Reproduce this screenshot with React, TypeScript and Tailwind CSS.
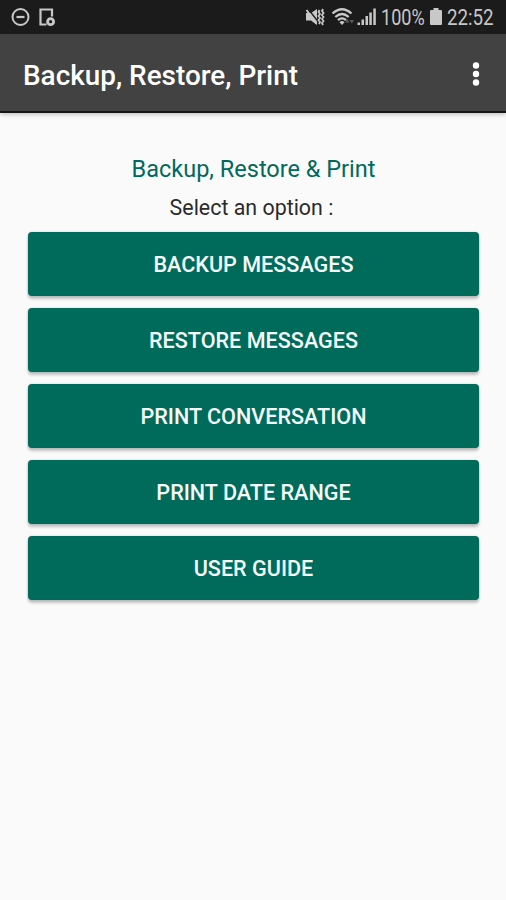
const options = [
  "Backup messages",
  "Restore messages",
  "Print conversation",
  "Print date range",
  "User guide",
];

export default function App() {
  return (
    <div className="flex h-[900px] w-[506px] flex-col overflow-hidden bg-[#fafafa] font-['Roboto','Noto_Sans',sans-serif]">
      <StatusBar />
      <AppBar />
      <main className="flex flex-col pt-10 pr-[27px] pl-[28px]">
        <h2 className="text-center text-[23.5px] leading-[32px] text-[#00695c]">
          Backup, Restore &amp; Print
        </h2>
        <p className="mr-1 mt-2 text-center text-[21.4px] leading-[30px] text-[#2b2b2b]">
          Select an option :
        </p>
        <div className="mt-[9px] flex flex-col gap-3">
          {options.map((label) => (
            <OptionButton key={label} label={label} />
          ))}
        </div>
      </main>
    </div>
  );
}

function OptionButton({ label }: { label: string }) {
  return (
    <button className="h-16 w-full rounded-[4px] bg-[#006a5b] pt-[2px] text-[21.6px] font-medium text-[#f4faf9] uppercase shadow-[0_0_2px_rgba(0,0,0,0.22),0_3px_3px_rgba(0,0,0,0.22)]">
      {label}
    </button>
  );
}

function StatusBar() {
  return (
    <div className="flex h-[34px] shrink-0 items-center bg-[#1b1b1b] pr-3 pl-[10px] text-[#c8c8c8]">
      <DoNotDisturbIcon />
      <DeviceIcon />
      <div className="ml-auto flex items-center">
        <MutedIcon />
        <WifiIcon />
        <SignalIcon />
        <span className="ml-1 inline-block w-[45px] origin-left scale-x-[0.82] pt-[2px] text-[22px] leading-8">
          100%
        </span>
        <BatteryIcon />
        <span className="ml-[5px] inline-block w-[47px] origin-left scale-x-[0.85] pt-[2px] text-[22px] leading-8">
          22:52
        </span>
      </div>
    </div>
  );
}

function AppBar() {
  return (
    <header className="flex h-[79px] shrink-0 items-center justify-between border-b-2 border-[#161616] bg-[#424242] pl-[23px] shadow-[0_2px_4px_rgba(0,0,0,0.2)]">
      <h1 className="mt-[6px] text-[27.9px] leading-9 font-medium text-white">
        Backup, Restore, Print
      </h1>
      <button className="mt-[2px] mr-[23px]" aria-label="More options">
        <svg className="h-6 w-[14px]" viewBox="0 0 14 24" fill="white">
          <circle cx="7" cy="3.5" r="3.2" />
          <circle cx="7" cy="12" r="3.2" />
          <circle cx="7" cy="20.5" r="3.2" />
        </svg>
      </button>
    </header>
  );
}

function DoNotDisturbIcon() {
  return (
    <svg className="h-5 w-5" viewBox="0 0 20 20" fill="none" stroke="currentColor">
      <circle cx="10.5" cy="10" r="8" strokeWidth={2} />
      <path d="M6.5 10h8" strokeWidth={2.2} />
    </svg>
  );
}

function DeviceIcon() {
  return (
    <svg className="ml-2 h-5 w-5" viewBox="0 0 20 20" fill="none" stroke="currentColor">
      <path d="M8.5 17.5H2.5V2.5h11.5v7" strokeWidth={2.2} />
      <circle cx="12.6" cy="14.7" r="3" strokeWidth={2.8} />
    </svg>
  );
}

function MutedIcon() {
  return (
    <svg className="h-5 w-5" viewBox="0 0 20 20" fill="none">
      <path d="M1 6h5l6-4v16l-6-4.5H1z" fill="currentColor" />
      <path d="M3.5 2.5l9.5 12" stroke="#1b1b1b" strokeWidth={1.3} />
      <path d="M1.5 3l10 13.5" stroke="currentColor" strokeWidth={2} />
      <path
        d="M14.5 3l-1 2 1.5 2-1.5 2 1.5 2-1.5 2 1.5 2-1 2M18 2l-1 2 1.5 2-1.5 2 1.5 2-1.5 2 1.500 2-1.500 2 1 2"
        stroke="currentColor"
        strokeWidth={1.8}
      />
    </svg>
  );
}

function WifiIcon() {
  return (
    <svg className="ml-[6px] h-5 w-6" viewBox="0 0 24 20" fill="none">
      <path
        d="M1.5 6.5Q11 -2 20.5 6.5M4.300 10Q11 4 17.700 10M7 13.200Q11 9.500 15 13.200"
        stroke="currentColor"
        strokeWidth={2.3}
      />
      <path d="M8.5 15.200Q11 13 13.5 15.200L11 18z" fill="currentColor" />
      <path d="M14 15.500l2.300-3.500 2.300 3.500zM18.500 13l2.300 3.500 2.300-3.500z" fill="#5c5c5c" />
    </svg>
  );
}

function SignalIcon() {
  return (
    <svg className="ml-[2px] h-5 w-5" viewBox="0 0 20 20" fill="currentColor">
      <rect x="0.5" y="15.5" width="2.5" height="2.5" />
      <rect x="4.5" y="12.5" width="2.5" height="5.5" />
      <rect x="8.5" y="9" width="2.5" height="9" />
      <rect x="12.300" y="5.500" width="2.5" height="12.5" />
      <rect x="16.300" y="1.500" width="2.500" height="16.5" />
    </svg>
  );
}

function BatteryIcon() {
  return (
    <svg className="ml-[4px] h-5 w-3" viewBox="0 0 12 20" fill="currentColor">
      <path d="M3.5 1h5v2H11a1 1 0 0 1 1 1v13a1 1 0 0 1-1 1H1a1 1 0 0 1-1-1V4a1 1 0 0 1 1-1h2.5z" />
    </svg>
  );
}
